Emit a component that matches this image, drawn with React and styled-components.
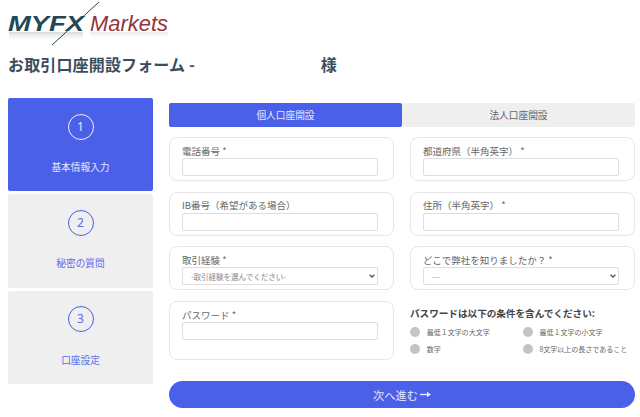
import styled, { createGlobalStyle } from "styled-components"

const GlobalStyle = createGlobalStyle`
html, body {
    margin: 0;
    padding: 0;
    background: #fff;
}
body {
    font-family: 'Noto Sans CJK JP', 'Noto Sans', sans-serif;
    overflow: hidden;
}
`

const steps = [
    { n: 1, label: "基本情報入力", active: true },
    { n: 2, label: "秘密の質問" },
    { n: 3, label: "口座設定" },
]

const rules = ["最低１文字の大文字", "最低１文字の小文字", "数字", "8文字以上の長さであること"]

function Logo() {
    return (
        <svg width="180" height="46" viewBox="0 0 180 46">
            <defs>
                <linearGradient id="fade" x1="0" y1="0" x2="0" y2="1">
                    <stop offset="0" stopColor="#8a9396" stopOpacity="0.35" />
                    <stop offset="1" stopColor="#fff" stopOpacity="0" />
                </linearGradient>
                <linearGradient id="fadeRed" x1="0" y1="0" x2="0" y2="1">
                    <stop offset="0" stopColor="#b09a9c" stopOpacity="0.22" />
                    <stop offset="1" stopColor="#fff" stopOpacity="0" />
                </linearGradient>
            </defs>
            <rect x="9" y="32" width="74" height="10" fill="url(#fade)" />
            <rect x="90" y="32" width="78" height="8" fill="url(#fadeRed)" />
            <text x="8" y="31" textLength="76" lengthAdjust="spacingAndGlyphs" fill="#234753" fontFamily="Liberation Sans" fontSize="22" fontStyle="italic" fontWeight="700">MYFX</text>
            <text x="90" y="31" textLength="78" lengthAdjust="spacingAndGlyphs" fill="#96333a" fontFamily="Liberation Sans" fontSize="22" fontStyle="italic">Markets</text>
            <line x1="52" y1="45" x2="99" y2="2" stroke="#234753" strokeWidth="1" />
        </svg>
    )
}

function Chevron() {
    return (
        <svg width="6" height="4" viewBox="0 0 6 4">
            <path d="M0.6 0.7 L3 3 L5.4 0.7" fill="none" stroke="#555" strokeWidth="1.3" />
        </svg>
    )
}

function App() {
    return (
        <Page>
            <GlobalStyle />
            <Header><Logo /></Header>
            <Title>
                <span>お取引口座開設フォーム -</span>
                <span>様</span>
            </Title>
            <Body>
                <Sidebar>
                    {steps.map((s) => (
                        <Step key={s.n} $active={s.active}>
                            <StepNumber $active={s.active}>{s.n}</StepNumber>
                            <StepLabel>{s.label}</StepLabel>
                        </Step>
                    ))}
                </Sidebar>
                <Content>
                    <Tabs>
                        <Tab $active>個人口座開設</Tab>
                        <Tab>法人口座開設</Tab>
                    </Tabs>
                    <Grid>
                        <Card>
                            <Label>電話番号 *</Label>
                            <Input />
                        </Card>
                        <Card>
                            <Label>都道府県（半角英字） *</Label>
                            <Input />
                        </Card>
                        <Card>
                            <Label>IB番号（希望がある場合）</Label>
                            <Input />
                        </Card>
                        <Card>
                            <Label>住所（半角英字） *</Label>
                            <Input />
                        </Card>
                        <Card>
                            <Label>取引経験 *</Label>
                            <SelectWrap>
                                <Select defaultValue="">
                                    <option value="">-取引経験を選んでください-</option>
                                </Select>
                                <Chevron />
                            </SelectWrap>
                        </Card>
                        <Card>
                            <Label>どこで弊社を知りましたか？ *</Label>
                            <SelectWrap>
                                <Select defaultValue="">
                                    <option value="">---</option>
                                </Select>
                                <Chevron />
                            </SelectWrap>
                        </Card>
                        <Card $tall>
                            <Label>パスワード *</Label>
                            <Input type="password" />
                        </Card>
                        <Rules>
                            <RulesTitle>パスワードは以下の条件を含んでください:</RulesTitle>
                            <RulesGrid>
                                {rules.map((r) => (
                                    <Rule key={r}>
                                        <Dot />
                                        {r}
                                    </Rule>
                                ))}
                            </RulesGrid>
                        </Rules>
                    </Grid>
                    <NextButton type="button">
                        次へ進む
                        <svg width="11" height="7" viewBox="0 0 11 7">
                            <path d="M0 3.5 H8" stroke="#e6e9fc" strokeWidth="1.4" />
                            <path d="M7 0.8 L11 3.5 L7 6.2 Z" fill="#e6e9fc" />
                        </svg>
                    </NextButton>
                </Content>
            </Body>
        </Page>
    )
}

const Page = styled.div`
width: 640px;
height: 417px;
box-sizing: border-box;
padding: 0 5px 0 8px;
overflow: hidden;
`
const Header = styled.div`
height: 46px;
margin-left: -8px;
svg {
    display: block;
}
`
const Title = styled.h1`
margin: 7px 0 0;
height: 45px;
width: 329px;
display: flex;
justify-content: space-between;
font-size: 16px;
line-height: 23px;
font-weight: 700;
letter-spacing: 0.15px;
color: #3c4d60;
`
const Body = styled.div`
display: flex;
gap: 16px;
align-items: flex-start;
`
const Sidebar = styled.div`
width: 145px;
display: flex;
flex-direction: column;
gap: 3px;
`
const Step = styled.div`
height: 93.3px;
box-sizing: border-box;
border-radius: 2px;
padding-top: 15.7px;
display: flex;
flex-direction: column;
align-items: center;
background: ${(p) => (p.$active ? "#4a60e8" : "#efefef")};
color: ${(p) => (p.$active ? "#e6e9fc" : "#5a6eea")};
`
const StepNumber = styled.div`
width: 26px;
height: 26px;
box-sizing: border-box;
border-radius: 50%;
border: 1px solid ${(p) => (p.$active ? "#f0f0f0" : "#4a60e8")};
display: flex;
align-items: center;
justify-content: center;
font-family: 'Noto Sans', sans-serif;
font-size: 12px;
line-height: 1;
`
const StepLabel = styled.div`
margin-top: 20.5px;
font-size: 9.7px;
line-height: 14px;
`
const Content = styled.div`
width: 466px;
padding-top: 5.3px;
`
const Tabs = styled.div`
display: flex;
height: 23.4px;
margin-bottom: 10.6px;
`
const Tab = styled.div`
flex: 1;
display: flex;
align-items: center;
justify-content: center;
border-radius: 2px;
font-size: 9.7px;
background: ${(p) => (p.$active ? "#4a60e8" : "#efefef")};
color: ${(p) => (p.$active ? "#e6e9fc" : "#666")};
`
const Grid = styled.div`
display: grid;
grid-template-columns: 225px 225px;
column-gap: 16px;
row-gap: 10.6px;
`
const Card = styled.div`
box-sizing: border-box;
height: ${(p) => (p.$tall ? "59px" : "44px")};
padding: 5.5px 15px 0 12px;
border: 1px solid #e6e6e6;
border-radius: 8px;
background: #fff;
`
const Label = styled.div`
font-size: 9.5px;
line-height: 14px;
white-space: nowrap;
color: #666;
`
const Input = styled.input`
display: block;
box-sizing: border-box;
width: 196px;
height: 18px;
margin-top: 0.5px;
padding: 0 6px;
border: 1px solid #dedede;
border-radius: 2px;
background: #fff;
outline: none;
`
const SelectWrap = styled.div`
position: relative;
width: 196px;
margin-top: 0.5px;
svg {
    position: absolute;
    right: 3px;
    top: 7px;
    pointer-events: none;
}
`
const Select = styled.select`
display: block;
box-sizing: border-box;
width: 196px;
height: 18px;
padding: 0 8px;
appearance: none;
border: 1px solid #dedede;
border-radius: 2px;
background: #fff;
color: #888;
font-family: inherit;
font-size: 7.5px;
outline: none;
`
const Rules = styled.div`
padding-top: 5px;
`
const RulesTitle = styled.div`
font-size: 9.6px;
line-height: 14px;
font-weight: 700;
color: #444;
`
const RulesGrid = styled.div`
display: grid;
grid-template-columns: 112.7px 1fr;
row-gap: 4.7px;
margin-top: 6px;
`
const Rule = styled.div`
display: flex;
align-items: center;
gap: 6.4px;
height: 12px;
font-size: 7px;
white-space: nowrap;
color: #666;
`
const Dot = styled.span`
flex: none;
width: 10.4px;
height: 10.4px;
border-radius: 50%;
background: #c4c4c4;
`
const NextButton = styled.button`
display: flex;
align-items: center;
justify-content: center;
gap: 2px;
width: 466px;
height: 27px;
margin-top: 21px;
padding: 0;
border: none;
border-radius: 14px;
background: #4a60e8;
color: #e6e9fc;
font-family: inherit;
font-size: 11.2px;
`

export default App
